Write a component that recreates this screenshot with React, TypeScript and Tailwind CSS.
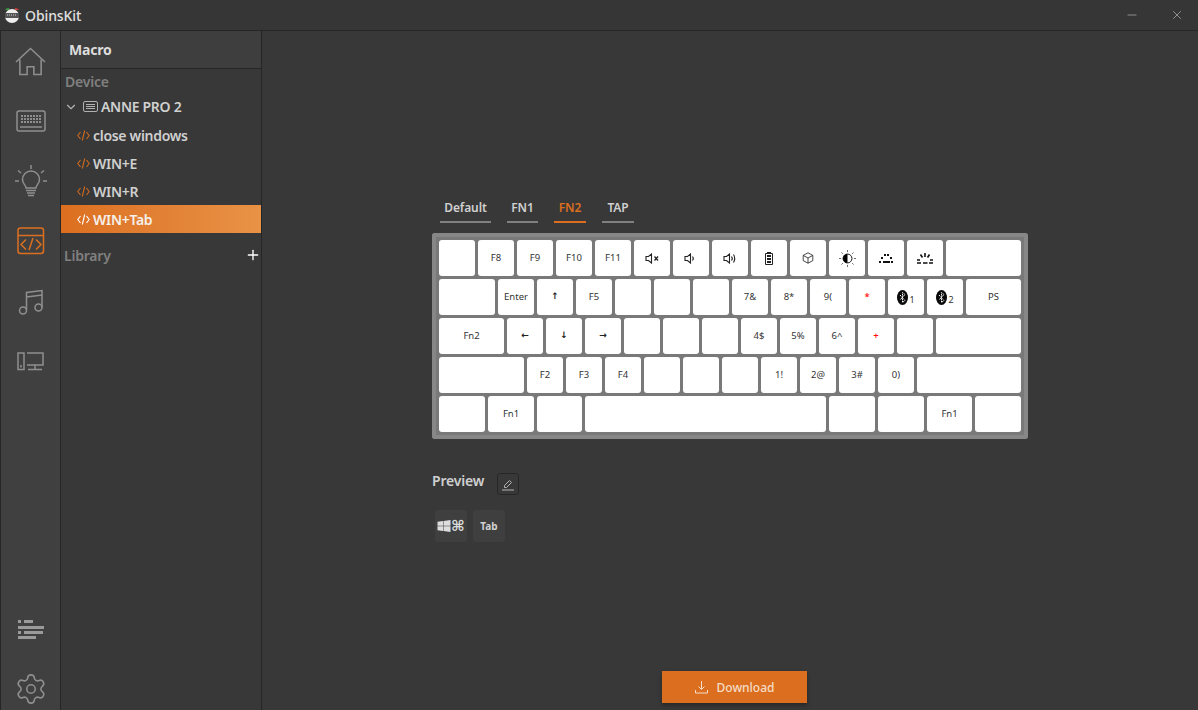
import { ChevronDown, Minus, Plus, Settings, X } from "lucide-react"

const MUTED = "#8f8f8f"

function HomeIcon() {
  return (
    <svg width="31" height="29" viewBox="0 0 32 30" fill="none" stroke={MUTED} strokeWidth="1.6">
      <path d="M1 15.5 16 1.5l15 14" />
      <path d="M5 13v15.5h7.5v-8h7v8H27V13" />
    </svg>
  )
}

function KeyboardIcon() {
  return (
    <svg width="30" height="22" viewBox="0 0 30 22" fill="none" stroke={MUTED}>
      <rect x="1" y="1" width="28" height="20" rx="2" strokeWidth="1.5" />
      <path d="M5 6h20M5 9h20M5 12h20" strokeWidth="2" strokeDasharray="2 1" />
      <path d="M4 17h22" strokeWidth="1.5" />
    </svg>
  )
}

function BulbIcon() {
  return (
    <svg width="32" height="32" viewBox="0 0 32 32" fill="none" stroke={MUTED} strokeWidth="1.5">
      <path d="M16 0v4M3 5.500l3 2.500M29 5.500 26 8M0 16h4M28 16h4" />
      <path d="M11 23c0-3-3.500-4-3.500-8.500a8.500 8.500 0 0 1 17 0C24.500 19 21 20 21 23z" />
      <path d="M11 25.500h10M12 28h8M13 30.500h6" />
    </svg>
  )
}

function MacroIcon() {
  return (
    <svg width="28" height="28" viewBox="0 0 28 28" fill="none" stroke="#dc6f1f" strokeWidth="1.5">
      <rect x="1" y="1" width="25.500" height="25.500" rx="2.500" />
      <path d="M1 8.500h25.500M9 12.500l-5 5 5 5M19 12.500l5 5-5 5M16 11l-4 12" />
    </svg>
  )
}

function MusicIcon() {
  return (
    <svg width="26" height="27" viewBox="0 0 26 27" fill="none" stroke={MUTED} strokeWidth="1.5">
      <path d="M8.500 22V4.500L24 2.500v17M8.500 9 24 7" />
      <circle cx="5" cy="22.500" r="3.500" />
      <circle cx="20.500" cy="19.500" r="3.500" />
    </svg>
  )
}

function DesktopIcon() {
  return (
    <svg width="27" height="19" viewBox="0 0 27 19" fill="none" stroke={MUTED} strokeWidth="1.500">
      <rect x="1" y="1" width="6" height="16.500" />
      <path d="M4 13v2.500" />
      <path d="M10 1h16v12H10M18 13v4M11 17.500h14" />
    </svg>
  )
}

function ListIcon() {
  return (
    <svg width="28" height="20" viewBox="0 0 28 20" fill="#9a9a9a">
      <rect x="1" y="1" width="3" height="3" />
      <rect x="7" y="1" width="9" height="3" />
      <rect x="1" y="7" width="26" height="3" />
      <rect x="1" y="12" width="3" height="3" />
      <rect x="7" y="12" width="19" height="3" />
      <rect x="1" y="17" width="18" height="3" />
    </svg>
  )
}

function CodeIcon({ color = "#cf6a1f" }: { color?: string }) {
  return (
    <svg width="13" height="11" viewBox="0 0 13 11" fill="none" stroke={color} strokeWidth="1.100">
      <path d="M3.500 2 .8 5.500l2.700 3.500M9.500 2l2.700 3.500L9.500 9M7.700 .5 5.300 10.500" />
    </svg>
  )
}

function DeviceIcon() {
  return (
    <svg width="15" height="11" viewBox="0 0 15 11" fill="none" stroke="#b0b0b0">
      <rect x=".5" y=".5" width="14" height="10" rx="1.500" />
      <path d="M3 3.500h9M3 5.500h9M3 7.500h9" />
    </svg>
  )
}

function Logo() {
  return (
    <svg width="16" height="17" viewBox="0 0 16 17">
      <path d="M1 3a4 3 0 0 1 4-2v2z" fill="#3f9b45" />
      <path d="M15 3a4 3 0 0 0-4-2v2z" fill="#c8403a" />
      <circle cx="8" cy="9" r="7" fill="#eeeeee" />
      <rect x="1" y="6" width="14" height="5" fill="#555555" />
      <path d="M3 8h10" stroke="#cccccc" strokeDasharray="1 1" />
    </svg>
  )
}

function Speaker({ level }: { level: "mute" | "low" | "high" }) {
  return (
    <svg width="15" height="11" viewBox="0 0 15 11" fill="none" stroke="#222222" strokeWidth="1.100">
      <path d="M1 3.500h2.500L6.500 1v9l-3-2.500H1z" />
      {level === "mute" && <path d="M9.500 3.500l3.500 4M13 3.500l-3.500 4" strokeWidth="1.300" />}
      {level !== "mute" && <path d="M8.500 3.500c.8 1 .8 3 0 4" />}
      {level === "high" && <path d="M10.500 1.500c1.500 2.500 1.500 5.500 0 8" />}
    </svg>
  )
}

function Battery() {
  return (
    <svg width="8" height="13" viewBox="0 0 8 13" fill="#222222">
      <path d="M2 0h4v1.500H2z" />
      <path d="M.5 1.500h7v11h-7z" fill="none" stroke="#222222" />
      <path d="M2 3h4v2H2zM2 6h4v2H2zM2 9h4v2H2z" />
    </svg>
  )
}

function Cube() {
  return (
    <svg width="12" height="12" viewBox="0 0 12 12" fill="none" stroke="#333333" strokeWidth=".9">
      <path d="M6 .8 10.800 3.400v5.200L6 11.200 1.200 8.600V3.400z" />
      <path d="M1.200 3.400 6 6l4.800-2.600M6 6v5.200" />
    </svg>
  )
}

function Brightness() {
  return (
    <svg width="17" height="17" viewBox="0 0 16 16" fill="none" stroke="#666666" strokeWidth=".9">
      <circle cx="8" cy="8" r="4.200" stroke="#111111" />
      <path d="M8 3.800a4.200 4.200 0 0 0 0 8.400z" fill="#000000" stroke="none" />
      <path d="M8 0v2M8 14v2M0 8h2M14 8h2M2.300 2.300l1.400 1.400M12.300 12.300l1.400 1.400M2.300 13.700l1.400-1.400M12.300 3.700l1.400-1.400" />
    </svg>
  )
}

function LightLow() {
  return (
    <svg width="14" height="9" viewBox="0 0 14 9" fill="#111111">
      <rect x="2" y="3" width="2" height="2" />
      <rect x="5" y="0" width="2" height="2" />
      <rect x="8" y="0" width="2" height="2" />
      <rect x="11" y="3" width="2" height="2" />
      <rect x="0" y="7" width="2" height="2" />
      <rect x="4" y="7" width="7" height="2" />
      <rect x="12" y="7" width="2" height="2" />
    </svg>
  )
}

function LightHigh() {
  return (
    <svg width="16" height="11" viewBox="0 0 16 11" fill="none" stroke="#111111" strokeWidth="1.600">
      <path d="M8 0v4M3.500 1.500l2 3M12.500 1.500l-2 3M0 7h3M13 7h3M0 10h4M6 10h4.500M12 10h4" />
    </svg>
  )
}

function Bluetooth({ n }: { n: number }) {
  return (
    <span className="flex items-end">
      <svg width="11" height="15" viewBox="0 0 11 15">
        <ellipse cx="5.500" cy="7.500" rx="5.500" ry="7.500" fill="#0a0a0a" />
        <path d="M3 5l5 5.500-2.500 2v-10L8 4.500 3 10" fill="none" stroke="#ffffff" strokeDasharray="1.500 .7" />
      </svg>
      <span className="ml-[1px] text-[9px] leading-[10px]">{n}</span>
    </span>
  )
}

type KeyDef = { w: number; label?: string; icon?: React.ReactNode; red?: boolean }

const k = (label?: string, red?: boolean): KeyDef => ({ w: 36, label, red })
const ic = (icon: React.ReactNode): KeyDef => ({ w: 36, icon })
const arrow = (ch: string) => ic(<span className="font-['DejaVu_Sans',sans-serif] text-[9px] font-bold text-[#222222]">{ch}</span>)

const ROWS: KeyDef[][] = [
  [
    k(), k("F8"), k("F9"), k("F10"), k("F11"),
    ic(<Speaker level="mute" />), ic(<Speaker level="low" />), ic(<Speaker level="high" />),
    ic(<Battery />), ic(<Cube />), ic(<Brightness />), ic(<LightLow />), ic(<LightHigh />),
    { w: 75 },
  ],
  [
    { w: 56 }, k("Enter"), arrow("↑"), k("F5"), k(), k(), k(), k("7&"), k("8*"), k("9("), k("*", true),
    ic(<Bluetooth n={1} />), ic(<Bluetooth n={2} />), { w: 55, label: "PS" },
  ],
  [
    { w: 65, label: "Fn2" }, arrow("←"), arrow("↓"), arrow("→"), k(), k(), k(), k("4$"), k("5%"), k("6^"), k("+", true), k(),
    { w: 85 },
  ],
  [
    { w: 85 }, k("F2"), k("F3"), k("F4"), k(), k(), k(), k("1!"), k("2@"), k("3#"), k("0)"),
    { w: 104 },
  ],
  [
    { w: 46 }, { w: 46, label: "Fn1" }, { w: 45 }, { w: 241 }, { w: 46 }, { w: 46 },
    { w: 45, label: "Fn1" }, { w: 46 },
  ],
]

function Key({ def }: { def: KeyDef }) {
  return (
    <div
      className={`flex h-9 items-center justify-center rounded-[3px] bg-white text-[9.5px] ${def.red ? "font-semibold text-[#ff1010]" : "text-[#333333]"}`}
      style={{ width: def.w }}
    >
      {def.icon ?? def.label}
    </div>
  )
}

const TABS = [
  { name: "Default", w: "w-[51px]" },
  { name: "FN1", w: "w-[31px]" },
  { name: "FN2", w: "w-[32px]", active: true },
  { name: "TAP", w: "w-[32px]" },
]

const MACROS = ["close windows", "WIN+E", "WIN+R"]

export default function App() {
  return (
    <div className="flex h-[710px] w-[1198px] flex-col overflow-hidden bg-[#383838] font-['Noto_Sans',sans-serif] text-[#d0d0d0]">
      {/* title bar */}
      <header className="flex h-[31px] shrink-0 items-center border-b border-[#262626] bg-[#363636] pl-[4px]">
        <Logo />
        <span className="ml-[5px] text-[14px] font-medium tracking-[-0.1px] text-[#e0e0e0]">ObinsKit</span>
        <div className="ml-auto flex items-center gap-[31px] pr-[14px] text-[#b4b4b4]">
          <Minus size={14} strokeWidth={1.2} />
          <X size={14} strokeWidth={1.2} />
        </div>
      </header>

      <div className="flex min-h-0 flex-1">
        {/* icon rail */}
        <nav className="flex w-[61px] shrink-0 flex-col border-x border-[#262626] bg-[#404040]">
          <div className="flex h-[60px] items-center justify-center"><HomeIcon /></div>
          <div className="flex h-[60px] items-center justify-center"><KeyboardIcon /></div>
          <div className="flex h-[60px] items-center justify-center"><BulbIcon /></div>
          <div className="flex h-[60px] items-center justify-center"><MacroIcon /></div>
          <div className="flex h-[60px] items-center justify-center"><MusicIcon /></div>
          <div className="flex h-[60px] items-center justify-center"><DesktopIcon /></div>
          <div className="mt-auto flex h-[60px] items-center justify-center"><ListIcon /></div>
          <div className="mb-[-9px] flex h-[60px] shrink-0 items-center justify-center text-[#8f8f8f]">
            <Settings size={34} strokeWidth={1.1} />
          </div>
        </nav>

        {/* side panel */}
        <aside className="flex w-[201px] shrink-0 flex-col border-r border-[#262626] bg-[#383838]">
          <div className="flex h-[38px] shrink-0 items-center border-b border-[#262626] bg-[#3e3e3e] pl-[8px] text-[14px] font-bold tracking-[-0.2px] text-[#dddddd]">
            Macro
          </div>
          <div className="flex h-[25px] items-center pl-[4px] text-[14px] font-semibold tracking-[-0.2px] text-[#808080]">Device</div>
          <div className="flex h-[25px] items-center pl-[3px] text-[14px] font-semibold tracking-[-0.3px]">
            <ChevronDown size={14} className="text-[#b0b0b0]" />
            <span className="ml-[5px]"><DeviceIcon /></span>
            <span className="ml-[3px]">ANNE PRO 2</span>
          </div>
          <div className="mt-[2px]">
            {MACROS.map((name) => (
              <div key={name} className="flex h-7 items-center pl-[16px] text-[14px] font-semibold tracking-[-0.3px]">
                <CodeIcon />
                <span className="ml-[3px]">{name}</span>
              </div>
            ))}
            <div className="flex h-7 items-center bg-gradient-to-r from-[#dc6f1f] to-[#e89246] pl-[16px] text-[14px] font-semibold tracking-[-0.3px] text-[#f5f0ea]">
              <CodeIcon color="#ffffff" />
              <span className="ml-[3px]">WIN+Tab</span>
            </div>
          </div>
          <div className="mt-[8px] flex h-[28px] items-center justify-between pl-[3px] text-[14px] font-semibold tracking-[-0.2px] text-[#808080]">
            Library
            <Plus size={16} strokeWidth={2} className="text-white" />
          </div>
        </aside>

        {/* main */}
        <main className="flex min-w-0 flex-1 flex-col pl-[170px]">
          <div className="mt-[168px] ml-[8px] flex gap-4">
            {TABS.map((t) => (
              <div
                key={t.name}
                className={`h-[24px] border-b-2 text-center text-[12px] font-semibold leading-[18px] tracking-[-0.1px] ${t.w} ${t.active ? "border-[#dc6f1f] text-[#dc6f1f]" : "border-[#808080] text-[#d0d0d0]"}`}
              >
                {t.name}
              </div>
            ))}
          </div>
          <div className="mt-[10px] flex w-[596px] flex-col gap-[3px] rounded-[3px] bg-[#797979] p-[7px] shadow-[inset_0_0_0_4px_#878787]">
            {ROWS.map((row, i) => (
              <div key={i} className="flex gap-[3px]">
                {row.map((def, j) => (
                  <Key key={j} def={def} />
                ))}
              </div>
            ))}
          </div>
          <div className="mt-[34px] flex h-[22px] items-start">
            <span className="text-[14px] font-semibold leading-[16px] tracking-[-0.2px] text-[#d0d0d0]">Preview</span>
            <span className="ml-[13px] flex h-[22px] w-[22px] items-center justify-center rounded-[3px] border border-[#262626]">
              <svg width="12" height="13" viewBox="0 0 12 13" fill="none" stroke="#b4b4b4">
                <path d="M2.500 9.500V7.500L7.500 2.500l2 2-5 5zM0 12h12" />
              </svg>
            </span>
          </div>
          <div className="mt-[15px] ml-[3px] flex gap-[6px]">
            <div className="flex h-8 w-8 items-center justify-center rounded-[3px] bg-[#3f3f3f] text-[15px] font-bold leading-none text-[#dddddd]">
              <svg width="14" height="12" viewBox="0 0 13 12" fill="#dddddd" className="shrink-0">
                <path d="M0 1.800 5.500 1v4.700H0zM6 .9 13 0v5.700H6zM0 6.300h5.500V11L0 10.200zM6 6.300h7V12l-7-.9z" />
              </svg>
              <span className="font-['DejaVu_Sans',sans-serif]">⌘</span>
            </div>
            <div className="flex h-8 w-8 items-center justify-center rounded-[3px] bg-[#3f3f3f] text-[10px] font-bold text-[#d0d0d0]">
              Tab
            </div>
          </div>
          <button className="mb-[7px] ml-[230px] mt-auto flex h-8 w-[145px] items-center justify-center gap-[9px] bg-[#dc6f1f] text-[12px] font-medium text-[#f5dcc6] shadow-[0_2px_4px_rgba(0,0,0,0.35)]">
            <svg width="13" height="13" viewBox="0 0 13 13" fill="none" stroke="#f5dcc6">
              <path d="M6.500 0v8M3.500 5.500l3 3 3-3M.5 9v3h12V9" />
            </svg>
            <span className="pt-px">Download</span>
          </button>
        </main>
      </div>
    </div>
  )
}
